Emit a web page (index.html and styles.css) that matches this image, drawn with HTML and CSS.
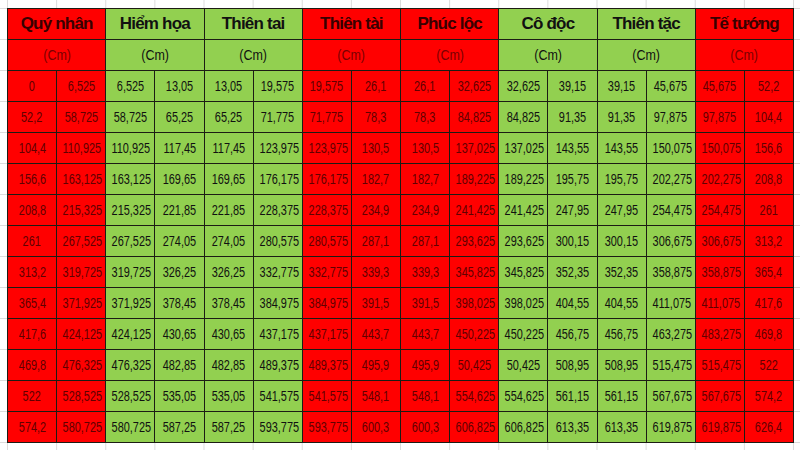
FILE: index.html
```html
<!DOCTYPE html>
<html lang="vi">
<head>
<meta charset="utf-8">
<title>Bảng thước Lỗ Ban</title>
<link rel="stylesheet" href="styles.css">
</head>
<body>
<table class="sheet">
  <colgroup>
    <col><col><col><col><col><col><col><col><col><col><col><col><col><col><col><col>
  </colgroup>
  <thead>
    <tr class="title">
      <th colspan="2" class="r">Quý nhân</th>
      <th colspan="2" class="g">Hiểm họa</th>
      <th colspan="2" class="g">Thiên tai</th>
      <th colspan="2" class="r">Thiên tài</th>
      <th colspan="2" class="r">Phúc lộc</th>
      <th colspan="2" class="g">Cô độc</th>
      <th colspan="2" class="g">Thiên tặc</th>
      <th colspan="2" class="r">Tế tướng</th>
    </tr>
    <tr class="unit">
      <td colspan="2" class="r"><span>(Cm)</span></td>
      <td colspan="2" class="g"><span>(Cm)</span></td>
      <td colspan="2" class="g"><span>(Cm)</span></td>
      <td colspan="2" class="r"><span>(Cm)</span></td>
      <td colspan="2" class="r"><span>(Cm)</span></td>
      <td colspan="2" class="g"><span>(Cm)</span></td>
      <td colspan="2" class="g"><span>(Cm)</span></td>
      <td colspan="2" class="r"><span>(Cm)</span></td>
    </tr>
  </thead>
  <tbody>
    <tr><td class="r"><span>0</span></td><td class="r"><span>6,525</span></td><td class="g"><span>6,525</span></td><td class="g"><span>13,05</span></td><td class="g"><span>13,05</span></td><td class="g"><span>19,575</span></td><td class="r"><span>19,575</span></td><td class="r"><span>26,1</span></td><td class="r"><span>26,1</span></td><td class="r"><span>32,625</span></td><td class="g"><span>32,625</span></td><td class="g"><span>39,15</span></td><td class="g"><span>39,15</span></td><td class="g"><span>45,675</span></td><td class="r"><span>45,675</span></td><td class="r"><span>52,2</span></td></tr>
    <tr><td class="r"><span>52,2</span></td><td class="r"><span>58,725</span></td><td class="g"><span>58,725</span></td><td class="g"><span>65,25</span></td><td class="g"><span>65,25</span></td><td class="g"><span>71,775</span></td><td class="r"><span>71,775</span></td><td class="r"><span>78,3</span></td><td class="r"><span>78,3</span></td><td class="r"><span>84,825</span></td><td class="g"><span>84,825</span></td><td class="g"><span>91,35</span></td><td class="g"><span>91,35</span></td><td class="g"><span>97,875</span></td><td class="r"><span>97,875</span></td><td class="r"><span>104,4</span></td></tr>
    <tr><td class="r"><span>104,4</span></td><td class="r"><span>110,925</span></td><td class="g"><span>110,925</span></td><td class="g"><span>117,45</span></td><td class="g"><span>117,45</span></td><td class="g"><span>123,975</span></td><td class="r"><span>123,975</span></td><td class="r"><span>130,5</span></td><td class="r"><span>130,5</span></td><td class="r"><span>137,025</span></td><td class="g"><span>137,025</span></td><td class="g"><span>143,55</span></td><td class="g"><span>143,55</span></td><td class="g"><span>150,075</span></td><td class="r"><span>150,075</span></td><td class="r"><span>156,6</span></td></tr>
    <tr><td class="r"><span>156,6</span></td><td class="r"><span>163,125</span></td><td class="g"><span>163,125</span></td><td class="g"><span>169,65</span></td><td class="g"><span>169,65</span></td><td class="g"><span>176,175</span></td><td class="r"><span>176,175</span></td><td class="r"><span>182,7</span></td><td class="r"><span>182,7</span></td><td class="r"><span>189,225</span></td><td class="g"><span>189,225</span></td><td class="g"><span>195,75</span></td><td class="g"><span>195,75</span></td><td class="g"><span>202,275</span></td><td class="r"><span>202,275</span></td><td class="r"><span>208,8</span></td></tr>
    <tr><td class="r"><span>208,8</span></td><td class="r"><span>215,325</span></td><td class="g"><span>215,325</span></td><td class="g"><span>221,85</span></td><td class="g"><span>221,85</span></td><td class="g"><span>228,375</span></td><td class="r"><span>228,375</span></td><td class="r"><span>234,9</span></td><td class="r"><span>234,9</span></td><td class="r"><span>241,425</span></td><td class="g"><span>241,425</span></td><td class="g"><span>247,95</span></td><td class="g"><span>247,95</span></td><td class="g"><span>254,475</span></td><td class="r"><span>254,475</span></td><td class="r"><span>261</span></td></tr>
    <tr><td class="r"><span>261</span></td><td class="r"><span>267,525</span></td><td class="g"><span>267,525</span></td><td class="g"><span>274,05</span></td><td class="g"><span>274,05</span></td><td class="g"><span>280,575</span></td><td class="r"><span>280,575</span></td><td class="r"><span>287,1</span></td><td class="r"><span>287,1</span></td><td class="r"><span>293,625</span></td><td class="g"><span>293,625</span></td><td class="g"><span>300,15</span></td><td class="g"><span>300,15</span></td><td class="g"><span>306,675</span></td><td class="r"><span>306,675</span></td><td class="r"><span>313,2</span></td></tr>
    <tr><td class="r"><span>313,2</span></td><td class="r"><span>319,725</span></td><td class="g"><span>319,725</span></td><td class="g"><span>326,25</span></td><td class="g"><span>326,25</span></td><td class="g"><span>332,775</span></td><td class="r"><span>332,775</span></td><td class="r"><span>339,3</span></td><td class="r"><span>339,3</span></td><td class="r"><span>345,825</span></td><td class="g"><span>345,825</span></td><td class="g"><span>352,35</span></td><td class="g"><span>352,35</span></td><td class="g"><span>358,875</span></td><td class="r"><span>358,875</span></td><td class="r"><span>365,4</span></td></tr>
    <tr><td class="r"><span>365,4</span></td><td class="r"><span>371,925</span></td><td class="g"><span>371,925</span></td><td class="g"><span>378,45</span></td><td class="g"><span>378,45</span></td><td class="g"><span>384,975</span></td><td class="r"><span>384,975</span></td><td class="r"><span>391,5</span></td><td class="r"><span>391,5</span></td><td class="r"><span>398,025</span></td><td class="g"><span>398,025</span></td><td class="g"><span>404,55</span></td><td class="g"><span>404,55</span></td><td class="g"><span>411,075</span></td><td class="r"><span>411,075</span></td><td class="r"><span>417,6</span></td></tr>
    <tr><td class="r"><span>417,6</span></td><td class="r"><span>424,125</span></td><td class="g"><span>424,125</span></td><td class="g"><span>430,65</span></td><td class="g"><span>430,65</span></td><td class="g"><span>437,175</span></td><td class="r"><span>437,175</span></td><td class="r"><span>443,7</span></td><td class="r"><span>443,7</span></td><td class="r"><span>450,225</span></td><td class="g"><span>450,225</span></td><td class="g"><span>456,75</span></td><td class="g"><span>456,75</span></td><td class="g"><span>463,275</span></td><td class="r"><span>483,275</span></td><td class="r"><span>469,8</span></td></tr>
    <tr><td class="r"><span>469,8</span></td><td class="r"><span>476,325</span></td><td class="g"><span>476,325</span></td><td class="g"><span>482,85</span></td><td class="g"><span>482,85</span></td><td class="g"><span>489,375</span></td><td class="r"><span>489,375</span></td><td class="r"><span>495,9</span></td><td class="r"><span>495,9</span></td><td class="r"><span>50,425</span></td><td class="g"><span>50,425</span></td><td class="g"><span>508,95</span></td><td class="g"><span>508,95</span></td><td class="g"><span>515,475</span></td><td class="r"><span>515,475</span></td><td class="r"><span>522</span></td></tr>
    <tr><td class="r"><span>522</span></td><td class="r"><span>528,525</span></td><td class="g"><span>528,525</span></td><td class="g"><span>535,05</span></td><td class="g"><span>535,05</span></td><td class="g"><span>541,575</span></td><td class="r"><span>541,575</span></td><td class="r"><span>548,1</span></td><td class="r"><span>548,1</span></td><td class="r"><span>554,625</span></td><td class="g"><span>554,625</span></td><td class="g"><span>561,15</span></td><td class="g"><span>561,15</span></td><td class="g"><span>567,675</span></td><td class="r"><span>567,675</span></td><td class="r"><span>574,2</span></td></tr>
    <tr><td class="r"><span>574,2</span></td><td class="r"><span>580,725</span></td><td class="g"><span>580,725</span></td><td class="g"><span>587,25</span></td><td class="g"><span>587,25</span></td><td class="g"><span>593,775</span></td><td class="r"><span>593,775</span></td><td class="r"><span>600,3</span></td><td class="r"><span>600,3</span></td><td class="r"><span>606,825</span></td><td class="g"><span>606,825</span></td><td class="g"><span>613,35</span></td><td class="g"><span>613,35</span></td><td class="g"><span>619,875</span></td><td class="r"><span>619,875</span></td><td class="r"><span>626,4</span></td></tr>
  </tbody>
</table>
</body>
</html>
```

FILE: styles.css
```css
html, body {
  margin: 0;
  padding: 0;
}

body {
  width: 800px;
  height: 450px;
  overflow: hidden;
  box-sizing: border-box;
  padding: 8px 0 0 7px;
  background-color: #ffffff;
  background-image:
    linear-gradient(to right, #dcdcdc 1px, transparent 1px),
    linear-gradient(to bottom, #dcdcdc 1px, transparent 1px);
  background-size: 49.125px 31px;
  background-position: 7px 8px;
  font-family: "Liberation Sans", Arial, sans-serif;
}

.sheet {
  width: 786px;
  table-layout: fixed;
  border-collapse: collapse;
}

.sheet col {
  width: 49.125px;
}

.sheet tr {
  height: 31px;
}

.sheet th,
.sheet td {
  border: 1px solid #1c1c14;
  padding: 0;
  text-align: center;
  vertical-align: middle;
  white-space: nowrap;
  overflow: hidden;
}

.sheet td {
  font-size: 14px;
  line-height: 16px;
}

.sheet td span {
  display: inline-block;
  transform: scaleX(0.78);
  transform-origin: center;
}

.title th {
  font-weight: bold;
  font-size: 17px;
  letter-spacing: -0.8px;
}

.unit td {
  font-size: 14.5px;
}

.unit td span {
  transform: scaleX(0.86);
}

.r {
  background: #ff0000;
  color: #600000;
}

.g {
  background: #92d050;
  color: #111111;
}

.title th.r {
  color: #380000;
}

.unit td.r {
  color: #7a0000;
}
```
